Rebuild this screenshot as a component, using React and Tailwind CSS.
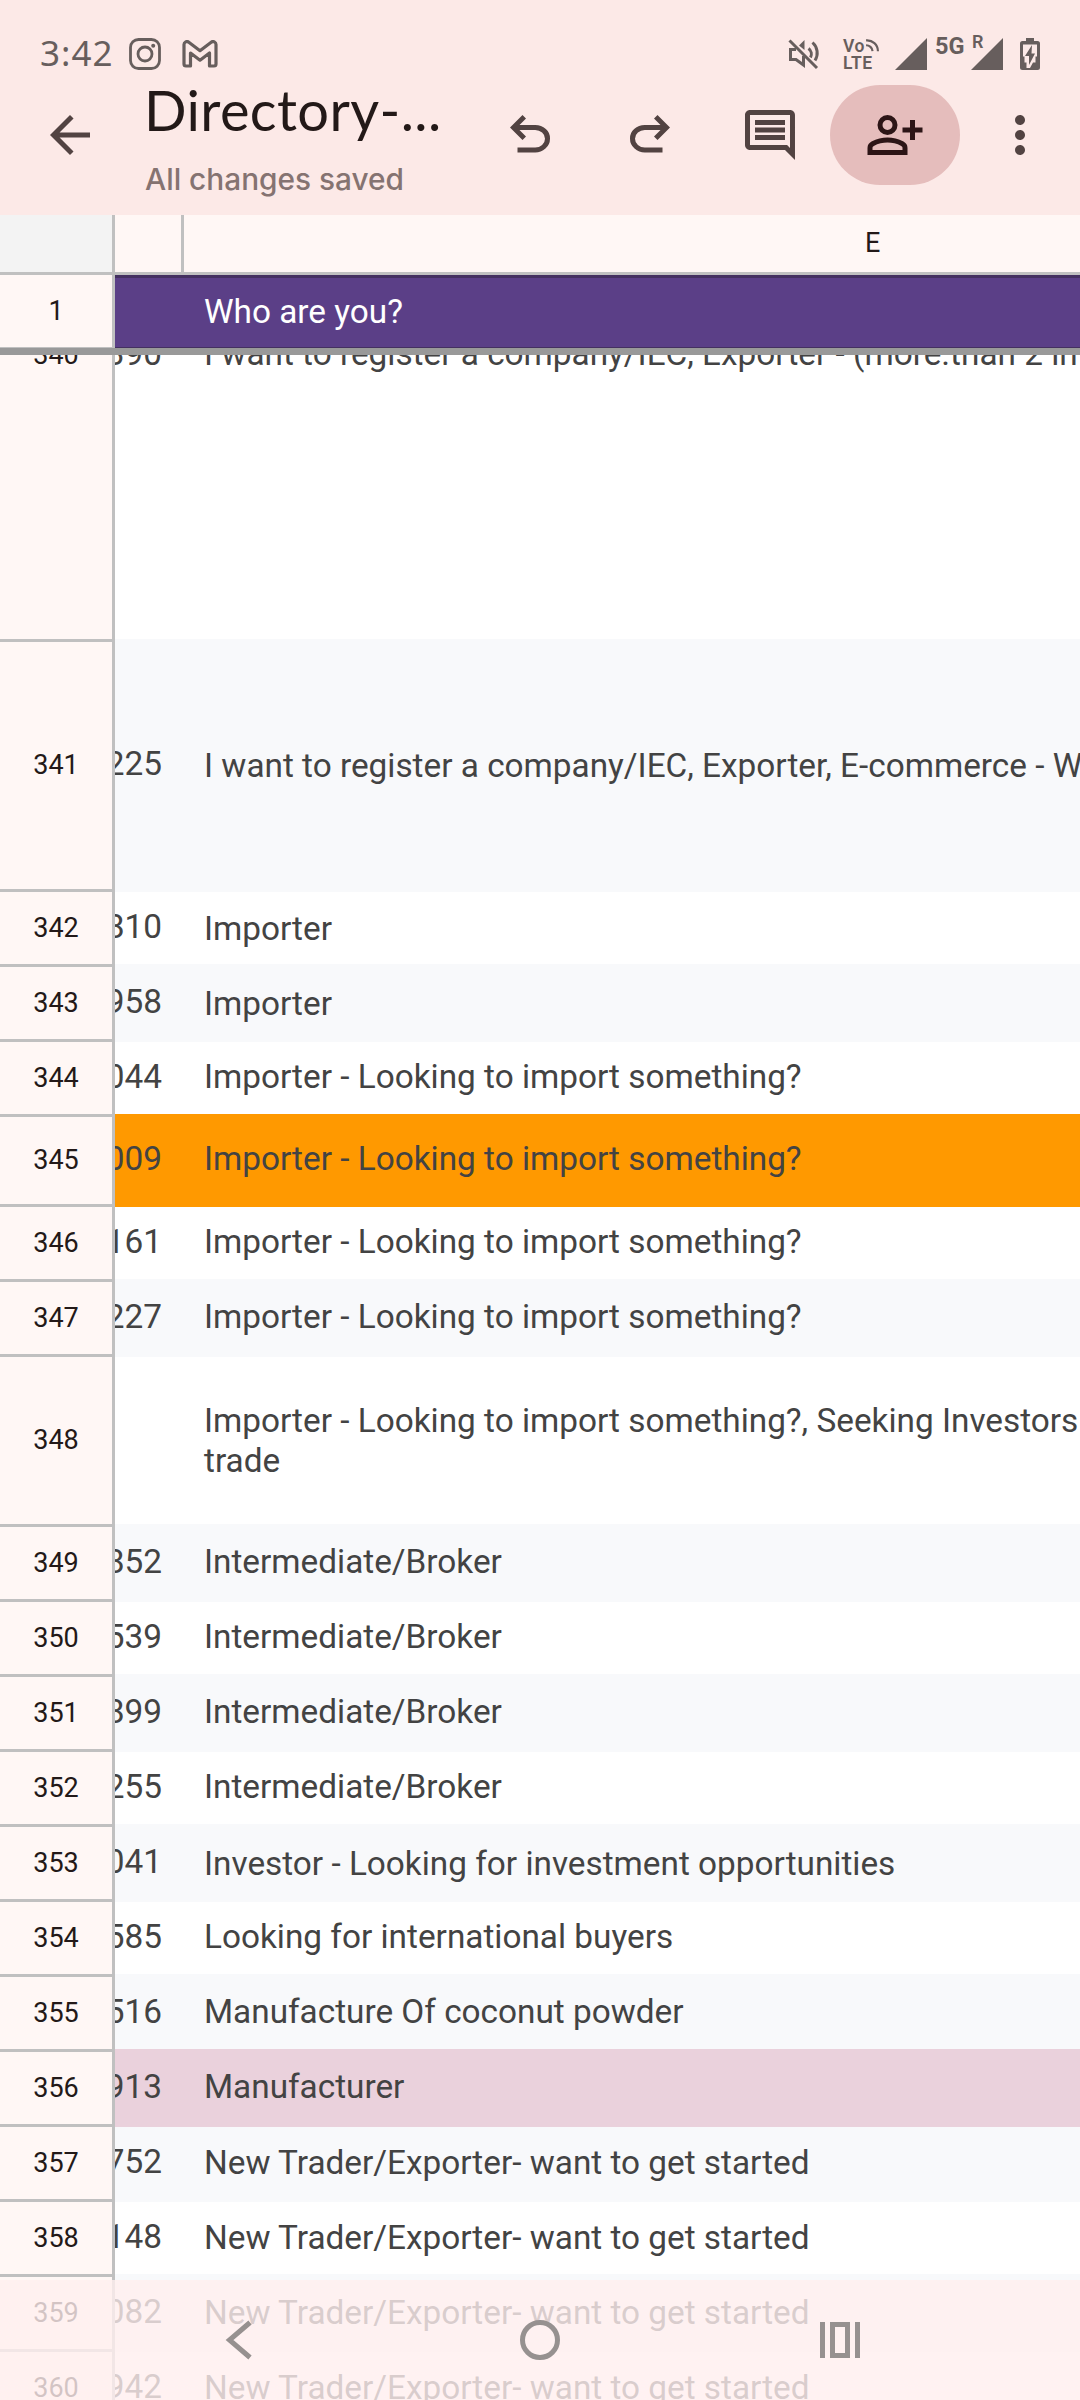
import React from 'react';
import { MdArrowBack, MdMoreVert } from 'react-icons/md';

const rows = [
  { n: 341, d: '225', text: 'I want to register a company/IEC, Exporter, E-commerce - W', h: 'h-[250px]', bg: 'bg-[#f8f9fb] shadow-[0_-3px_0_0_#f8f9fb]', pad: 'pt-[1px]' },
  { n: 342, d: '810', text: 'Importer', pad: 'pt-[1px]' },
  { n: 343, d: '958', text: 'Importer', bg: 'bg-[#f8f9fb] shadow-[0_-3px_0_0_#f8f9fb]', pad: 'pt-[1px]' },
  { n: 344, d: '044', text: 'Importer - Looking to import something?' },
  { n: 345, d: '009', text: 'Importer - Looking to import something?', h: 'h-[90px]', bg: 'bg-[#ff9900] shadow-[0_-3px_0_0_#ff9900]' },
  { n: 346, d: '161', text: 'Importer - Looking to import something?' },
  { n: 347, d: '227', text: 'Importer - Looking to import something?', bg: 'bg-[#f8f9fb] shadow-[0_-3px_0_0_#f8f9fb]' },
  { n: 348, d: '', text: 'Importer - Looking to import something?, Seeking Investors\ntrade', h: 'h-[170px]', pad: 'pb-0' },
  { n: 349, d: '852', text: 'Intermediate/Broker', bg: 'bg-[#f8f9fb] shadow-[0_-3px_0_0_#f8f9fb]' },
  { n: 350, d: '539', text: 'Intermediate/Broker' },
  { n: 351, d: '899', text: 'Intermediate/Broker', bg: 'bg-[#f8f9fb] shadow-[0_-3px_0_0_#f8f9fb]' },
  { n: 352, d: '255', text: 'Intermediate/Broker' },
  { n: 353, d: '041', text: 'Investor - Looking for investment opportunities', bg: 'bg-[#f8f9fb] shadow-[0_-3px_0_0_#f8f9fb]', pad: 'pt-[1px]' },
  { n: 354, d: '585', text: 'Looking for international buyers' },
  { n: 355, d: '516', text: 'Manufacture Of coconut powder', bg: 'bg-[#f8f9fb] shadow-[0_-3px_0_0_#f8f9fb]' },
  { n: 356, d: '913', text: 'Manufacturer', bg: 'bg-[#ead1dc] shadow-[0_-3px_0_0_#ead1dc]' },
  { n: 357, d: '752', text: 'New Trader/Exporter- want to get started', bg: 'bg-[#f8f9fb]', pad: 'pb-[1px]' },
  { n: 358, d: '148', text: 'New Trader/Exporter- want to get started', pad: 'pb-[1px]' },
  { n: 359, d: '082', text: 'New Trader/Exporter- want to get started', bg: 'bg-[#f8f9fb] shadow-[0_-3px_0_0_#f8f9fb]', pad: 'pb-[1px]' },
  { n: 360, d: '942', text: 'New Trader/Exporter- want to get started', pad: 'pb-[1px]' },
];

const UndoIcon = ({ className }) => (
  <svg viewBox="0 -960 960 960" fill="currentColor" className={`size-[60px] ${className || ''}`}>
    <path d="M280-200v-80h284q63 0 109.5-40T720-420q0-60-46.5-100T564-560H312l104 104-56 56-200-200 200-200 56 56-104 104h252q97 0 169.5 63T800-420q0 94-72.5 157T564-200H280Z" />
  </svg>
);

const CommentIcon = () => (
  <svg viewBox="0 0 24 24" fill="currentColor" className="size-[60px]">
    <path d="M21.99 4c0-1.1-.89-2-1.99-2H4c-1.1 0-2 .9-2 2v12c0 1.1.9 2 2 2h14l4 4-.01-18zM20 4v13.17L18.83 16H4V4h16zM6 12h12v2H6zm0-3h12v2H6zm0-3h12v2H6z" />
  </svg>
);

const PersonAddIcon = () => (
  <svg viewBox="0 -960 960 960" fill="currentColor" className="size-[60px]">
    <path d="M720-400v-120H600v-80h120v-120h80v120h120v80H800v120h-80Zm-360-80q-66 0-113-47t-47-113q0-66 47-113t113-47q66 0 113 47t47 113q0 66-47 113t-113 47ZM40-160v-112q0-34 17.5-62.5T104-378q62-31 126-46.5T360-440q66 0 130 15.5T616-378q29 15 46.5 43.5T680-272v112H40Zm80-80h480v-32q0-11-5.5-20T580-306q-54-27-109-40.5T360-360q-56 0-111 13.5T140-306q-9 5-14.5 14t-5.5 20v32Zm240-320q33 0 56.5-23.5T440-640q0-33-23.5-56.5T360-720q-33 0-56.5 23.5T280-640q0 33 23.5 56.5T360-560Z" />
  </svg>
);

const InstagramIcon = () => (
  <svg width="32" height="32" viewBox="0 0 32 32" fill="none" stroke="currentColor" strokeWidth="2.8">
    <rect x="1.5" y="1.5" width="29" height="29" rx="8" />
    <circle cx="16" cy="16" r="7" />
    <circle cx="24.2" cy="7.8" r="2" fill="currentColor" stroke="none" />
  </svg>
);

const GmailIcon = () => (
  <svg width="36" height="28" viewBox="0 0 36 28" fill="none" stroke="currentColor" strokeWidth="3.2" strokeLinejoin="round">
    <path d="M2 4.5V24a2 2 0 0 0 2 2h4.5V13l9.5 7.2L27.5 13v13H32a2 2 0 0 0 2-2V4.5c0-2.5-2.8-3.8-4.8-2.3L18 10.7 6.8 2.2C4.8.7 2 2 2 4.5Z" />
  </svg>
);

const MuteIcon = () => (
  <svg width="32" height="32" viewBox="0 0 32 32" fill="none" stroke="currentColor" strokeWidth="3">
    <path d="M1.5 2.5 29 30" />
    <path d="M8 11.5H2.5v10H8l7.5 5.5v-9" />
    <path d="M11 7.5 16.5 2v10Z" fill="currentColor" stroke="none" />
    <path d="M20.5 10.5a7 7 0 0 1 2 9M24.5 4.5a14 14 0 0 1 2.5 18" />
  </svg>
);

const VolteIcon = () => (
  <div className="flex flex-col font-['Roboto',sans-serif] text-[17.5px] leading-[16.5px] font-semibold tracking-[0.5px]">
    <div className="flex">
      <span>Vo</span>
      <svg width="14" height="14" viewBox="0 0 13 13" fill="none" stroke="currentColor" strokeWidth="2">
        <path d="M1 2.2a10 10 0 0 1 11 10M1 6.7a6 6 0 0 1 6 5.5" />
      </svg>
    </div>
    <span>LTE</span>
  </div>
);

const SignalIcon = () => (
  <svg width="32" height="32" viewBox="0 0 32 32" fill="currentColor">
    <path d="M32 0v32H0Z" />
  </svg>
);

const BatteryIcon = () => (
  <svg width="20" height="32" viewBox="0 0 20 32">
    <path d="M6 0h8v3h3.5A2.5 2.5 0 0 1 20 5.5v24a2.5 2.5 0 0 1-2.5 2.5h-15A2.5 2.5 0 0 1 0 29.5v-24A2.5 2.5 0 0 1 2.5 3H6Z" fill="currentColor" />
    <path d="M3 6.5h14v12h-1.5v6H13L10 30H6.5v-5.5h-2v-6H3Z" fill="#fce9e7" />
    <path d="M12 7 5 18h4v9l6-11.5h-3.5Z" fill="currentColor" />
  </svg>
);

const StatusBar = () => (
  <div className="flex h-[85px] items-start justify-between pt-[38px] pr-[40px] pl-[40px] text-[#675e5d]">
    <div className="flex items-start">
      <span className="-mt-[9px] w-[89px] font-['Noto_Sans',sans-serif] text-[35px] leading-[48px] tracking-[1px]">3:42</span>
      <InstagramIcon />
      <div className="mt-[2px] ml-[21px]">
        <GmailIcon />
      </div>
    </div>
    <div className="flex items-start">
      <div className="w-[56px]">
        <MuteIcon />
      </div>
      <div className="-ml-px w-[52px]">
        <VolteIcon />
      </div>
      <SignalIcon />
      <span className="-mt-[3px] ml-[8px] w-[36px] font-['Roboto',sans-serif] text-[23.5px] leading-[22px] font-bold">5G</span>
      <div className="relative mr-[17px]">
        <SignalIcon />
        <span className="absolute -top-[6px] left-[1px] font-['Roboto',sans-serif] text-[18px] leading-[20px] font-semibold">R</span>
      </div>
      <BatteryIcon />
    </div>
  </div>
);

const Toolbar = () => (
  <div className="flex h-[130px] items-start pl-[40px] text-[#524342]">
    <MdArrowBack className="mt-[20px] size-[60px]" />
    <div className="ml-[45px] w-[355px]">
      <div className="-mt-[13px] -ml-px font-['Lato',sans-serif] text-[56px] leading-[76px] tracking-[0.4px] whitespace-nowrap text-[#231918]">Directory-...</div>
      <div className="mt-[13px] font-['Inter',sans-serif] text-[29.8px] leading-[36px] font-medium whitespace-nowrap text-[#857371]">All changes saved</div>
    </div>
    <div className="mt-[20px] flex">
      <UndoIcon />
      <UndoIcon className="ml-[60px] -scale-x-100" />
      <div className="ml-[60px]">
        <CommentIcon />
      </div>
    </div>
    <button className="ml-[30px] flex h-[100px] w-[130px] items-center justify-center rounded-full bg-[#e5bdbc] text-[#2c1516]">
      <PersonAddIcon />
    </button>
    <MdMoreVert className="mt-[20px] ml-[30px] size-[60px]" />
  </div>
);

const ColumnHeader = () => (
  <div className="flex h-[60px] shrink-0 border-b-[3px] border-[#c0c0c0] bg-[#fff7f5]">
    <div className="w-[115px] border-r-[3px] border-[#c0c0c0] bg-[#f3f3f3]" />
    <div className="w-[69px] border-r-[3px] border-[#c0c0c0]" />
    <div className="pt-[10px] pl-[681px] text-[27px] leading-[36px] text-[#231918]">E</div>
  </div>
);

const FrozenRow = () => (
  <div className="flex h-[80px] shrink-0 border-b-[7px] border-[#999999]">
    <div className="flex w-[115px] items-center justify-center border-r-[3px] border-b border-r-[#c0c0c0] border-b-[#c0c0c0] bg-[#fff7f5] text-[27px] text-[#231918]">1</div>
    <div className="flex flex-1 items-center border-t-[3px] border-b border-t-[#443060] border-b-[#443060] bg-[#5b3f87] pb-[1px] pl-[89px] text-[33.33px] text-white">
      Who are you?
    </div>
  </div>
);

const Row = ({ n, d, text, h = 'h-[75px]', bg = 'bg-white', pad = 'pb-[3px]' }) => (
  <div className={`flex shrink-0 ${h}`}>
    <div className="flex w-[115px] shrink-0 items-center justify-center border-r-[3px] border-b-[3px] border-[#c0c0c0] bg-[#fff7f5] text-[27px] text-[#231918]">
      {n}
    </div>
    <div className={`flex min-w-0 flex-1 overflow-hidden pb-[3px] text-[33.33px] leading-[40px] text-[#434343] ${bg}`}>
      <div className="flex w-[69px] shrink-0 items-center justify-end overflow-hidden pr-[22px] pb-[3px]">{d}</div>
      <div className={`flex items-center pl-[20px] whitespace-pre ${pad}`}>{text}</div>
    </div>
  </div>
);

const NavBar = () => (
  <div className="absolute inset-x-0 bottom-0 h-[120px] bg-[#ffefef]/80 text-[#969190]">
    <div className="flex h-full items-center pl-[225px]">
      <svg width="28" height="40" viewBox="0 0 28 40" fill="none" stroke="currentColor" strokeWidth="5" className="mr-[267px]">
        <path d="M25 2.5 4.5 20 25 37.5" />
      </svg>
      <div className="mr-[260px] size-[40px] rounded-full border-[5px] border-current" />
      <div className="flex h-[36px] gap-[5px]">
        <div className="w-[5px] bg-current" />
        <div className="w-[20px] border-[5px] border-current" />
        <div className="w-[5px] bg-current" />
      </div>
    </div>
  </div>
);

const App = () => {
  return (
    <div className="relative flex h-[2400px] w-[1080px] flex-col overflow-hidden bg-white font-['Roboto',sans-serif]">
      <div className="h-[215px] shrink-0 bg-[#fce9e7]">
        <StatusBar />
        <Toolbar />
      </div>
      <ColumnHeader />
      <FrozenRow />
      {/* row 340 is scrolled half way under the frozen row */}
      <div className="flex h-[287px] shrink-0 flex-col justify-end overflow-hidden">
        <Row n={340} d="390" text="I want to register a company/IEC, Exporter - (more.than 2 in" h="h-[571px]" pad="pb-[2px]" />
      </div>
      {rows.map((row) => (
        <Row key={row.n} {...row} />
      ))}
      <NavBar />
    </div>
  );
};

export default App;
